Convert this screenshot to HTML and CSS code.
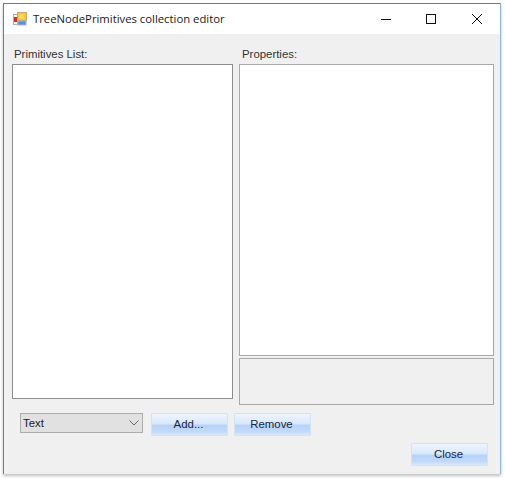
FILE: index.html
```html
<!DOCTYPE html>
<html lang="en">
<head>
<meta charset="utf-8">
<title>TreeNodePrimitives collection editor</title>
<link rel="stylesheet" href="styles.css">
</head>
<body>
<div class="window">
  <header class="titlebar">
    <svg class="app-icon" width="14" height="14" viewBox="0 0 14 14">
      <rect x="0.500" y="2.500" width="4" height="10" fill="#f4f0ea" stroke="#b5afa6"/>
      <rect x="1" y="5" width="3" height="5" fill="#c8362b"/>
      <rect x="4.500" y="0.500" width="9" height="8" fill="#f5c83a" stroke="#c9a86a"/>
      <rect x="6.500" y="2.500" width="4" height="4" fill="#f9dc62"/>
      <rect x="5" y="9" width="8" height="4" fill="#5f8fd0" stroke="#9db4d2"/>
    </svg>
    <span class="title">TreeNodePrimitives collection editor</span>
    <div class="controls">
      <svg class="ctl" width="46" height="30" viewBox="0 0 46 30"><path d="M19 15.500h10" stroke="#111" fill="none"/></svg>
      <svg class="ctl" width="46" height="30" viewBox="0 0 46 30"><rect x="18.500" y="10.500" width="9" height="9" stroke="#111" fill="none"/></svg>
      <svg class="ctl" width="46" height="30" viewBox="0 0 46 30"><path d="M18 10l10 10M28 10l-10 10" stroke="#111" fill="none"/></svg>
    </div>
  </header>
  <main class="client">
    <div class="columns">
      <section class="col-left">
        <div class="label">Primitives List:</div>
        <div class="listbox"></div>
      </section>
      <section class="col-right">
        <div class="label label-right">Properties:</div>
        <div class="grid"></div>
        <div class="help"></div>
      </section>
    </div>
    <div class="actions">
      <div class="combo"><span>Text</span>
        <svg width="10" height="6" viewBox="0 0 10 6"><path d="M0.500 0.500L5 5l4.500-4.500" stroke="#666" fill="none"/></svg>
      </div>
      <button class="btn">Add...</button>
      <button class="btn">Remove</button>
    </div>
    <div class="footer"><button class="btn">Close</button></div>
  </main>
</div>
</body>
</html>
```
FILE: styles.css
```css
html, body { margin: 0; padding: 0; background: #fff; }
body { width: 505px; height: 478px; overflow: hidden; font-family: "Liberation Sans", Arial, sans-serif; }
.window {
  margin: 3px 0 0 3px;
  width: 498px;
  height: 471px;
  box-sizing: border-box;
  border: 1px solid #2f8ddb;
  border-bottom: none;
  border-right-color: #8fb8da;
  box-shadow: 0 2px 3px rgba(0,0,0,.25);
  background: #f0f0f0;
  display: flex;
  flex-direction: column;
}
.titlebar {
  height: 30px;
  background: #fff;
  display: flex;
  align-items: center;
  padding-left: 9px;
  flex: none;
}
.app-icon { flex: none; margin-top: -1px; }
.title { margin-left: 6px; margin-top: -2px; font-family: "Open Sans", "Noto Sans", sans-serif; font-size: 11.3px; color: #1a1a1a; }
.controls { margin-left: auto; display: flex; gap: 0; }
.ctl { display: block; }
.client { flex: 1; padding: 0 6px 0 8px; display: flex; flex-direction: column; }
.columns { display: flex; gap: 6px; }
.col-left { width: 221px; }
.col-right { width: 255px; }
.label { height: 30px; padding: 13px 0 0 2px; box-sizing: border-box; font-size: 11.4px; line-height: 14px; color: #333; }
.label-right { padding-left: 3px; }
.listbox { height: 335px; box-sizing: border-box; background: #fff; border: 1px solid #8c8c8c; }
.grid { height: 292px; box-sizing: border-box; background: #fff; border: 1px solid #a8a8a8; }
.help { height: 47px; margin-top: 2px; box-sizing: border-box; background: #f0f0f0; border: 1px solid #a8a8a8; }
.actions { display: flex; align-items: flex-start; gap: 6px; margin-top: 8px; padding-left: 8px; }
.combo {
  width: 123px; height: 20px; margin-right: 2px; box-sizing: border-box;
  background: #e1e1e1; border: 1px solid #adadad;
  display: flex; align-items: center; justify-content: space-between;
  padding: 0 3px 0 2px; font-size: 11.4px; color: #222;
}
.btn {
  width: 77px; height: 23px; padding: 0 2px 1px 0; box-sizing: border-box;
  border: 1px solid #d3e3f7; border-radius: 1px;
  background: linear-gradient(#eef5fe 0%, #d9e8fc 45%, #b7d2f8 55%, #c3daf9 85%, #dce9fb 100%);
  font-family: "Liberation Sans", Arial, sans-serif; font-size: 11.4px; color: #15263f;
}
.footer { display: flex; justify-content: flex-end; margin-top: 7px; padding-right: 6px; }
```
